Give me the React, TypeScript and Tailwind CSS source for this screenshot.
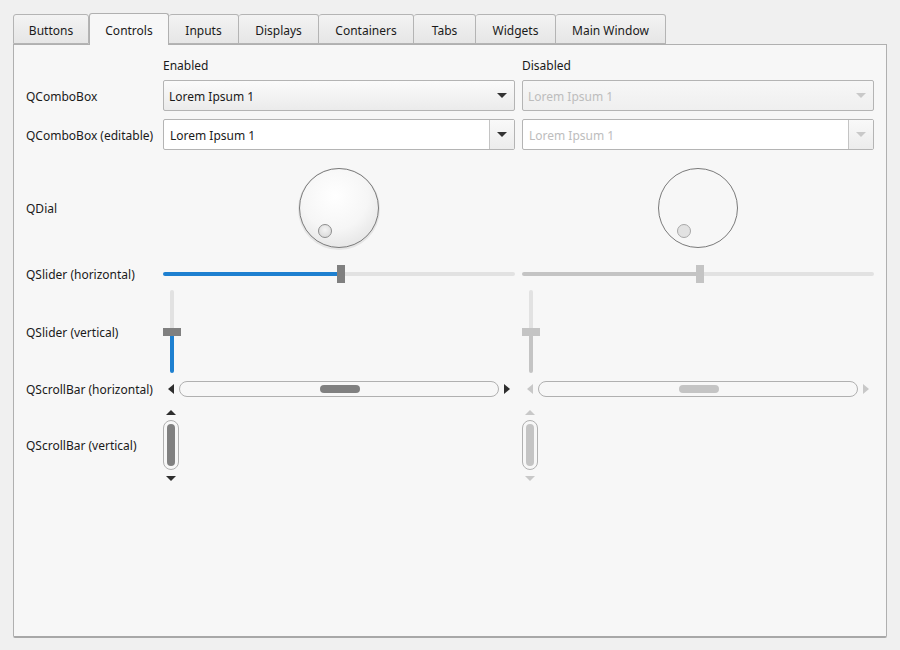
import React from "react";

const tabs = ["Buttons", "Controls", "Inputs", "Displays", "Containers", "Tabs", "Widgets", "Main Window"];
const tabW = [76, 80, 70, 80, 95, 62, 80, 110];

function Arrow({ dir, color, w = 10, h = 5 }: { dir: "up" | "down" | "left" | "right"; color: string; w?: number; h?: number }) {
  let pts = "";
  if (dir === "down") pts = `0,0 ${w},0 ${w / 2},${h}`;
  if (dir === "up") pts = `0,${h} ${w},${h} ${w / 2},0`;
  if (dir === "left") pts = `${w},0 ${w},${h} 0,${h / 2}`;
  if (dir === "right") pts = `0,0 0,${h} ${w},${h / 2}`;
  return (
    <svg width={w} height={h} viewBox={`0 0 ${w} ${h}`} className="block">
      <polygon points={pts} fill={color} />
    </svg>
  );
}

function Combo({ disabled, editable }: { disabled?: boolean; editable?: boolean }) {
  const text = disabled ? "text-[#bdbdbd]" : "text-[#1a1a1a]";
  const arrow = disabled ? "#c9c9c9" : "#333333";
  if (editable) {
    return (
      <div className="h-[31px] w-full flex border border-[#b4b4b4] rounded-[2px] bg-white">
        <div className={`flex-1 flex items-center pl-[6px] text-[12px] ${text}`}>
          <span className="translate-y-[1px]">Lorem Ipsum 1</span>
        </div>
        <div className="w-[25px] border-l border-[#c4c4c4] flex items-center justify-center bg-gradient-to-b from-[#f9f9f9] to-[#ececec]">
          <Arrow dir="down" color={arrow} />
        </div>
      </div>
    );
  }
  return (
    <div className={`h-[31px] w-full flex items-center border border-[#b4b4b4] rounded-[2px] ${disabled ? "bg-gradient-to-b from-[#f7f7f7] to-[#efefef]" : "bg-gradient-to-b from-[#fbfbfb] to-[#ebebeb]"}`}>
      <div className={`flex-1 pl-[5px] text-[12px] ${text}`}>
        <span className="inline-block translate-y-[1px]">Lorem Ipsum 1</span>
      </div>
      <div className="w-[25px] flex items-center justify-center">
        <Arrow dir="down" color={arrow} />
      </div>
    </div>
  );
}

function Dial({ disabled }: { disabled?: boolean }) {
  return (
    <svg width="88" height="88" viewBox="0 0 88 88" className="block">
      <defs>
        <radialGradient id="dg" cx="45%" cy="35%" r="70%">
          <stop offset="0%" stopColor="#ffffff" />
          <stop offset="60%" stopColor="#f6f6f6" />
          <stop offset="100%" stopColor="#e4e4e4" />
        </radialGradient>
        <radialGradient id="kn" cx="50%" cy="40%" r="60%">
          <stop offset="0%" stopColor="#f4f4f4" />
          <stop offset="100%" stopColor="#dadada" />
        </radialGradient>
      </defs>
      {disabled ? (
        <>
          <circle cx="44" cy="44" r="39.5" fill="none" stroke="#7a7a7a" strokeWidth="1" />
          <circle cx="30" cy="67" r="6.5" fill="#e2e2e2" stroke="#a8a8a8" strokeWidth="1" />
        </>
      ) : (
        <>
          <circle cx="44" cy="45" r="41" fill="#d8d8d8" opacity="0.6" />
          <circle cx="44" cy="44" r="39.5" fill="url(#dg)" stroke="#7a7a7a" strokeWidth="1" />
          <circle cx="30" cy="67" r="6.5" fill="url(#kn)" stroke="#8e8e8e" strokeWidth="1" />
        </>
      )}
    </svg>
  );
}

function HSlider({ disabled }: { disabled?: boolean }) {
  const fill = disabled ? "bg-[#c4c4c4]" : "bg-[#1e80d0]";
  const handle = disabled ? "bg-[#c4c4c4]" : "bg-[#808080]";
  return (
    <div className="h-[20px] w-full flex items-center">
      <div className={`h-[4px] w-[174px] rounded-l-full ${fill}`} />
      <div className={`h-[18px] w-[8px] ${handle}`} />
      <div className="h-[4px] flex-1 bg-[#e2e2e2] rounded-r-full" />
    </div>
  );
}

function VSlider({ disabled }: { disabled?: boolean }) {
  const fill = disabled ? "bg-[#c4c4c4]" : "bg-[#1e80d0]";
  const handle = disabled ? "bg-[#c4c4c4]" : "bg-[#808080]";
  return (
    <div className="h-[88px] w-[18px] flex flex-col items-center pt-[2px]">
      <div className="w-[4px] h-[38px] bg-[#e2e2e2] rounded-t-full" />
      <div className={`w-[18px] h-[8px] ${handle}`} />
      <div className={`w-[4px] h-[37px] rounded-b-full ${fill}`} />
    </div>
  );
}

function HScroll({ disabled }: { disabled?: boolean }) {
  const arrow = disabled ? "#c8c8c8" : "#2e2e2e";
  const handle = disabled ? "bg-[#c4c4c4]" : "bg-[#808080]";
  return (
    <div className="h-[16px] w-full flex items-center">
      <div className="w-[16px] h-[16px] flex items-center justify-center">
        <Arrow dir="left" color={arrow} w={6} h={10} />
      </div>
      <div className="w-[320px] h-[16px] rounded-full border border-[#b0b0b0] bg-[#f7f7f7] flex items-center pl-[140px]">
        <div className={`w-[40px] h-[8px] rounded-full ${handle}`} />
      </div>
      <div className="w-[16px] h-[16px] flex items-center justify-center">
        <Arrow dir="right" color={arrow} w={6} h={10} />
      </div>
    </div>
  );
}

function VScroll({ disabled }: { disabled?: boolean }) {
  const arrow = disabled ? "#c8c8c8" : "#2e2e2e";
  const handle = disabled ? "bg-[#c4c4c4]" : "bg-[#808080]";
  return (
    <div className="w-[16px] h-[82px] flex flex-col items-center">
      <div className="h-[16px] w-[16px] flex items-center justify-center">
        <Arrow dir="up" color={arrow} w={10} h={5} />
      </div>
      <div className="h-[50px] w-[16px] rounded-full border border-[#b0b0b0] bg-[#f7f7f7] flex justify-center pt-[3px]">
        <div className={`w-[8px] h-[42px] rounded-full ${handle}`} />
      </div>
      <div className="h-[16px] w-[16px] flex items-center justify-center">
        <Arrow dir="down" color={arrow} w={10} h={5} />
      </div>
    </div>
  );
}

function Row({ label, h, mt, children }: { label: string; h: number; mt: number; children: [React.ReactNode, React.ReactNode] }) {
  return (
    <div className="flex" style={{ height: h, marginTop: mt }}>
      <div className="w-[137px] flex items-center text-[12px] text-[#1a1a1a]">
        <span className="translate-y-[1px]">{label}</span>
      </div>
      <div className="w-[352px] flex items-center">{children[0]}</div>
      <div className="w-[7px]" />
      <div className="w-[352px] flex items-center">{children[1]}</div>
    </div>
  );
}

export default function App() {
  return (
    <div className="w-[900px] h-[650px] bg-[#f0f0f0] font-['Noto_Sans',sans-serif] text-[12px] pt-[13px] px-[13px]">
      <div className="flex h-[31px] items-end">
        {tabs.map((t, i) => {
          const sel = i === 1;
          return (
            <div
              key={t}
              style={{ width: tabW[i] }}
              className={
                sel
                  ? "h-[32px] -mb-[1px] relative z-10 bg-[#f7f7f7] border border-b-0 border-[#b0b0b0] rounded-t-[3px] flex items-center justify-center text-[#1a1a1a]"
                  : `h-[30px] bg-gradient-to-b from-[#f3f3f3] to-[#e6e6e6] border border-[#b4b4b4] ${i === 0 ? "" : "border-l-0"} rounded-t-[3px] flex items-center justify-center text-[#1a1a1a]`
              }
            >
              <span className={sel ? "translate-y-[1px]" : "translate-y-[2px]"}>{t}</span>
            </div>
          );
        })}
      </div>
      <div className="w-[874px] h-[594px] bg-[#f7f7f7] border border-[#b0b0b0] border-b-2 border-b-[#a8a8a8] rounded-b-[2px] px-[12px] pt-[11px]">
        <div className="flex h-[18px]">
          <div className="w-[137px]" />
          <div className="w-[352px] flex items-center text-[#1a1a1a]">
            <span className="translate-y-[1px]">Enabled</span>
          </div>
          <div className="w-[7px]" />
          <div className="w-[352px] flex items-center text-[#1a1a1a]">
            <span className="translate-y-[1px]">Disabled</span>
          </div>
        </div>
        <Row label="QComboBox" h={31} mt={6}>
          <Combo />
          <Combo disabled />
        </Row>
        <Row label="QComboBox (editable)" h={31} mt={8}>
          <Combo editable />
          <Combo editable disabled />
        </Row>
        <Row label="QDial" h={100} mt={8}>
          <div className="w-full flex justify-center">
            <Dial />
          </div>
          <div className="w-full flex justify-center">
            <Dial disabled />
          </div>
        </Row>
        <Row label="QSlider (horizontal)" h={20} mt={6}>
          <HSlider />
          <HSlider disabled />
        </Row>
        <Row label="QSlider (vertical)" h={88} mt={4}>
          <VSlider />
          <VSlider disabled />
        </Row>
        <Row label="QScrollBar (horizontal)" h={16} mt={5}>
          <HScroll />
          <HScroll disabled />
        </Row>
        <Row label="QScrollBar (vertical)" h={82} mt={7}>
          <VScroll />
          <VScroll disabled />
        </Row>
      </div>
    </div>
  );
}
